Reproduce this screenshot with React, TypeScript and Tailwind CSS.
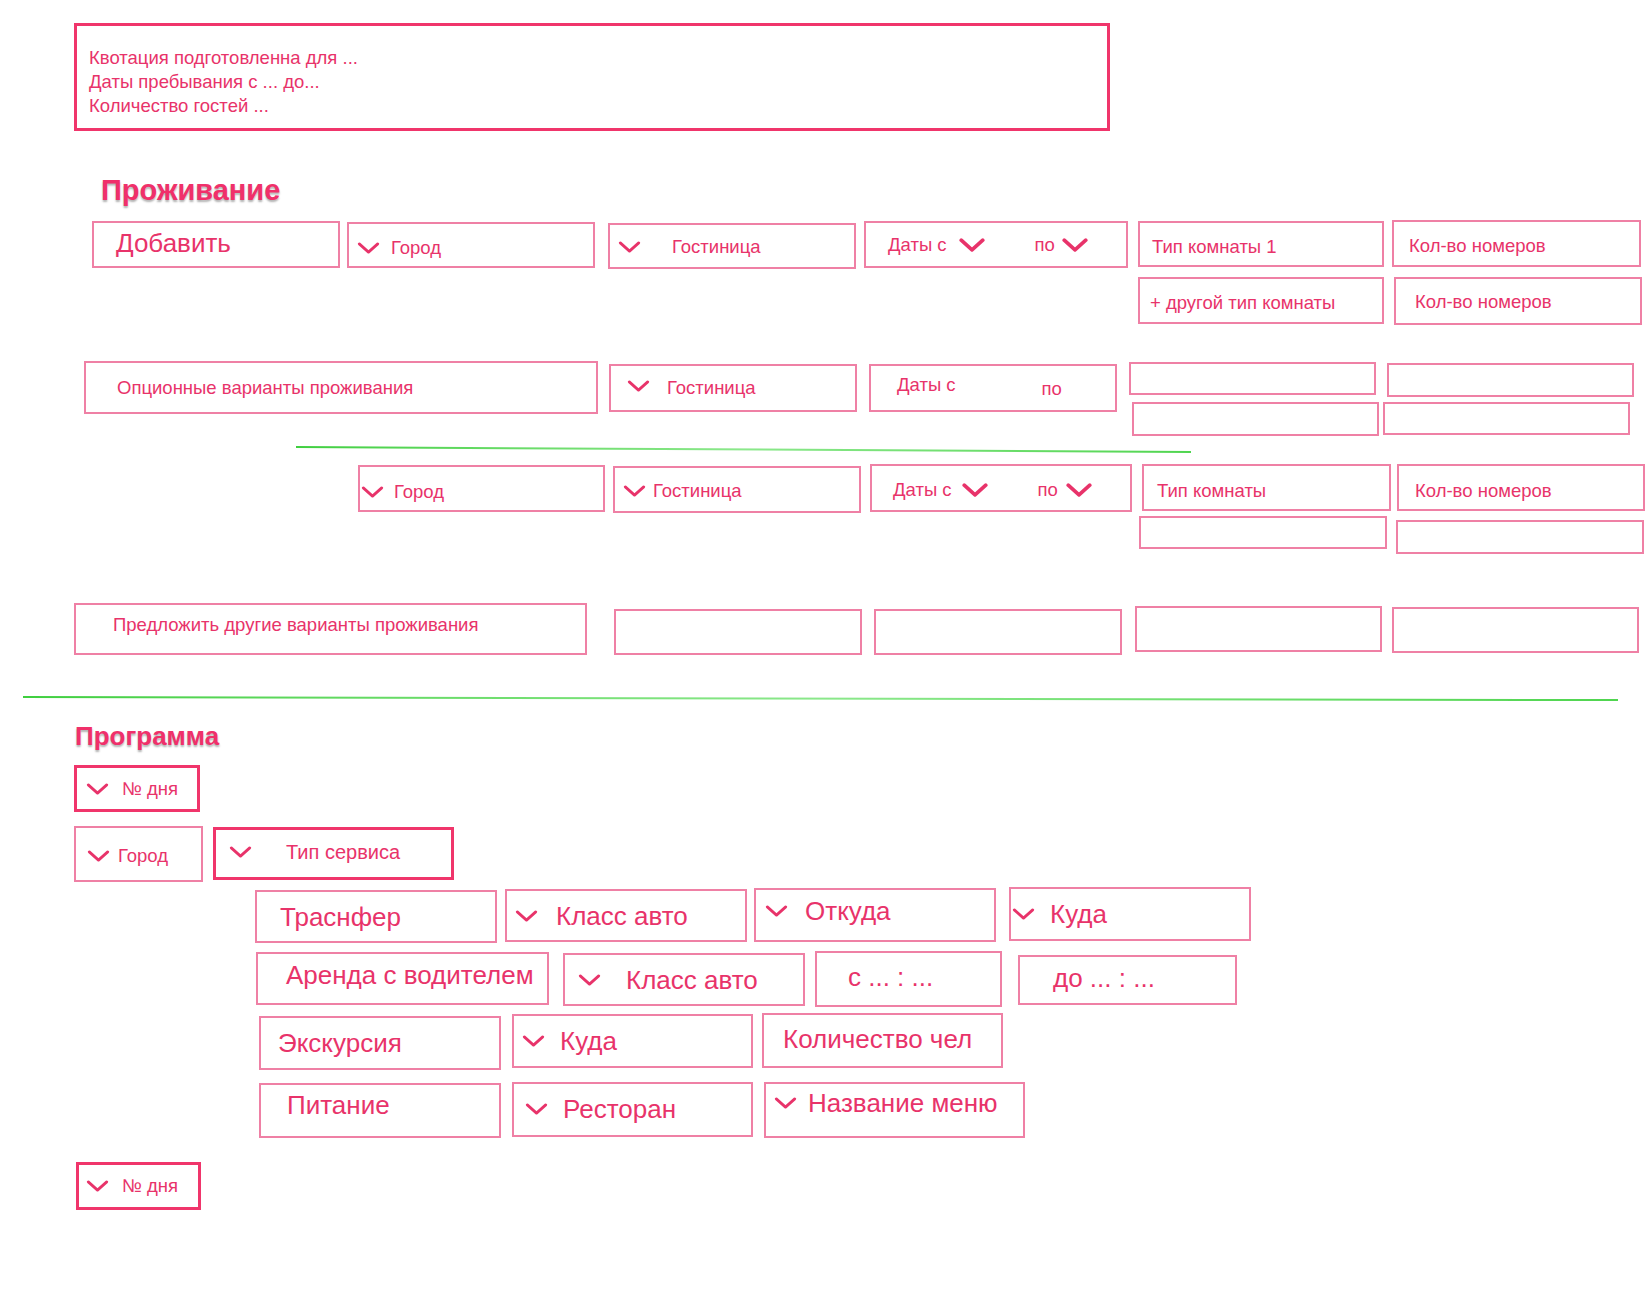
import React from "react";

const ink = "#e8336a";

function Box({
  className,
  thick = false,
  children,
}: {
  className: string;
  thick?: boolean;
  children?: React.ReactNode;
}) {
  return (
    <div
      className={
        "flex shrink-0 items-center whitespace-nowrap " +
        (thick ? "border-[3px] border-[#f0356b] " : "border-2 border-[#ef80a5] ") +
        className
      }
    >
      {children}
    </div>
  );
}

function Chevron({ big = false }: { big?: boolean }) {
  return (
    <svg
      viewBox="0 0 24 13"
      className={big ? "h-[14px] w-[26px] shrink-0" : "h-[12px] w-[23px] shrink-0"}
      fill="none"
    >
      <polyline
        points="2,2 12,11 22,2"
        stroke={ink}
        strokeWidth={big ? 3.4 : 3}
        strokeLinecap="round"
        strokeLinejoin="round"
      />
    </svg>
  );
}

export default function App() {
  return (
    <div className="flex h-[1289px] w-[1647px] flex-col items-start bg-white font-['Liberation_Sans',Arial,sans-serif] text-[18.5px] leading-[24px] text-[#e8336a]">
      {/* шапка квотации */}
      <div className="ml-[74px] mt-[23px] h-[108px] w-[1036px] shrink-0 border-[3px] border-[#f0356b] pl-[12px] pt-[20px]">
        <div>Квотация подготовленна для ...</div>
        <div>Даты пребывания с ... до...</div>
        <div>Количество гостей ...</div>
      </div>

      <h2 className="ml-[101px] mt-[44px] text-[29px] font-bold leading-[30px] text-[#f0306a] [text-shadow:0_2px_2px_rgba(0,0,0,0.3)]">
        Проживание
      </h2>

      {/* проживание: основной вариант */}
      <div className="mt-[15px] flex items-start">
        <Box className="ml-[92px] mt-[1px] h-[47px] w-[248px] pb-[4px] pl-[22px] text-[26px]">Добавить</Box>
        <Box className="ml-[7px] mt-[2px] h-[46px] w-[248px] pl-[8px] pt-[6px]">
          <Chevron />
          <span className="ml-[11px]">Город</span>
        </Box>
        <Box className="ml-[13px] mt-[3px] h-[46px] w-[248px] pl-[8px] pt-[2px]">
          <Chevron />
          <span className="ml-[31px]">Гостиница</span>
        </Box>
        <Box className="ml-[8px] mt-[1px] h-[47px] w-[264px] pl-[22px]">
          <span>Даты с</span>
          <span className="ml-[12px]"><Chevron big /></span>
          <span className="ml-[50px]">по</span>
          <span className="ml-[7px]"><Chevron big /></span>
        </Box>
        <div className="ml-[10px] mt-[1px] flex flex-col items-start">
          <Box className="h-[46px] w-[246px] pl-[12px] pt-[5px]">Тип комнаты 1</Box>
          <Box className="mt-[10px] h-[47px] w-[246px] pl-[10px] pt-[4px]">+ другой тип комнаты</Box>
        </div>
        <div className="ml-[8px] flex flex-col items-start">
          <Box className="h-[47px] w-[249px] pl-[15px] pt-[5px]">Кол-во номеров</Box>
          <Box className="ml-[2px] mt-[10px] h-[48px] w-[248px] pl-[19px] pt-[2px]">Кол-во номеров</Box>
        </div>
      </div>

      {/* опционные варианты */}
      <div className="mt-[36px] flex items-start">
        <Box className="ml-[84px] h-[53px] w-[514px] pl-[31px]">Опционные варианты проживания</Box>
        <Box className="ml-[11px] mt-[3px] h-[48px] w-[248px] pl-[16px]">
          <span className="mb-[4px]"><Chevron /></span>
          <span className="ml-[17px]">Гостиница</span>
        </Box>
        <Box className="ml-[12px] mt-[3px] h-[48px] w-[248px] pl-[26px]">
          <span className="mb-[7px]">Даты с</span>
          <span className="ml-[86px] mt-[2px]">по</span>
        </Box>
        <div className="ml-[12px] mt-[1px] flex flex-col items-start">
          <Box className="h-[33px] w-[247px]" />
          <Box className="ml-[3px] mt-[7px] h-[34px] w-[247px]" />
        </div>
        <div className="ml-[8px] mt-[2px] flex flex-col items-start">
          <Box className="h-[34px] w-[247px]" />
          <Box className="-ml-[4px] mt-[5px] h-[33px] w-[247px]" />
        </div>
      </div>

      <div className="ml-[296px] mt-[10px] h-[2px] w-[895px] shrink-0 origin-left rotate-[0.32deg] bg-gradient-to-r from-[#3fcf3f] via-[#8be88b] to-[#4fd54f]" />

      <div className="mt-[16px] flex items-start">
        <Box className="ml-[358px] mt-[1px] h-[47px] w-[247px] pl-[1px] pt-[6px]">
          <Chevron />
          <span className="ml-[10px]">Город</span>
        </Box>
        <Box className="ml-[8px] mt-[2px] h-[47px] w-[248px] pl-[8px] pt-[2px]">
          <Chevron />
          <span className="ml-[7px]">Гостиница</span>
        </Box>
        <Box className="ml-[9px] h-[48px] w-[262px] pl-[21px] pt-[3px]">
          <span>Даты с</span>
          <span className="ml-[10px]"><Chevron big /></span>
          <span className="ml-[50px]">по</span>
          <span className="ml-[8px]"><Chevron big /></span>
        </Box>
        <div className="ml-[10px] flex flex-col items-start">
          <Box className="h-[47px] w-[249px] pl-[13px] pt-[6px]">Тип комнаты</Box>
          <Box className="-ml-[3px] mt-[5px] h-[33px] w-[248px]" />
        </div>
        <div className="ml-[6px] flex flex-col items-start">
          <Box className="h-[47px] w-[248px] pl-[16px] pt-[6px]">Кол-во номеров</Box>
          <Box className="-ml-[1px] mt-[9px] h-[34px] w-[248px]" />
        </div>
      </div>

      <div className="mt-[49px] flex items-start">
        <Box className="ml-[74px] h-[52px] w-[513px] items-start pl-[37px] pt-[8px]">
          Предложить другие варианты проживания
        </Box>
        <Box className="ml-[27px] mt-[6px] h-[46px] w-[248px]" />
        <Box className="ml-[12px] mt-[6px] h-[46px] w-[248px]" />
        <Box className="ml-[13px] mt-[3px] h-[46px] w-[247px]" />
        <Box className="ml-[10px] mt-[4px] h-[46px] w-[247px]" />
      </div>

      <div className="ml-[23px] mt-[41px] h-[2px] w-[1595px] shrink-0 origin-left rotate-[0.11deg] bg-gradient-to-r from-[#3fcf3f] via-[#8be88b] to-[#4fd54f]" />

      <h2 className="ml-[75px] mt-[23px] text-[26px] font-bold leading-[30px] text-[#f0306a] [text-shadow:0_2px_2px_rgba(0,0,0,0.3)]">
        Программа
      </h2>

      {/* программа по дням */}
      <Box thick className="ml-[74px] mt-[14px] h-[47px] w-[126px] pl-[9px]">
        <Chevron />
        <span className="ml-[13px]">№ дня</span>
      </Box>

      <div className="mt-[14px] flex items-start">
        <Box className="ml-[74px] h-[56px] w-[129px] pl-[11px] pt-[4px]">
          <Chevron />
          <span className="ml-[8px]">Город</span>
        </Box>
        <Box thick className="ml-[10px] mt-[1px] h-[53px] w-[241px] pb-[3px] pl-[13px] text-[20px]">
          <Chevron />
          <span className="ml-[34px]">Тип сервиса</span>
        </Box>
      </div>

      <div className="mt-[5px] flex items-start text-[26px]">
        <Box className="ml-[255px] mt-[3px] h-[53px] w-[242px] pl-[23px]">Траснфер</Box>
        <Box className="ml-[8px] mt-[2px] h-[53px] w-[242px] pl-[8px]">
          <Chevron />
          <span className="ml-[18px]">Класс авто</span>
        </Box>
        <Box className="ml-[7px] mt-[1px] h-[54px] w-[242px] pb-[8px] pl-[9px]">
          <Chevron />
          <span className="ml-[17px]">Откуда</span>
        </Box>
        <Box className="ml-[13px] h-[54px] w-[242px] pl-[1px]">
          <Chevron />
          <span className="ml-[15px]">Куда</span>
        </Box>
      </div>

      <div className="mt-[8px] flex items-start text-[26px]">
        <Box className="ml-[256px] mt-[1px] h-[53px] w-[293px] pb-[8px] pl-[28px]">Аренда с водителем</Box>
        <Box className="ml-[14px] mt-[2px] h-[53px] w-[242px] pl-[13px]">
          <Chevron />
          <span className="ml-[25px]">Класс авто</span>
        </Box>
        <Box className="ml-[10px] h-[56px] w-[187px] pb-[4px] pl-[31px]">с ... : ...</Box>
        <Box className="ml-[16px] mt-[4px] h-[50px] w-[219px] pb-[4px] pl-[33px]">до ... : ...</Box>
      </div>

      <div className="mt-[6px] flex items-start text-[26px]">
        <Box className="ml-[259px] mt-[3px] h-[54px] w-[242px] pl-[17px]">Экскурсия</Box>
        <Box className="ml-[11px] mt-[1px] h-[54px] w-[241px] pl-[8px]">
          <Chevron />
          <span className="ml-[15px]">Куда</span>
        </Box>
        <Box className="ml-[9px] h-[55px] w-[241px] pb-[3px] pl-[19px]">Количество чел</Box>
      </div>

      <div className="mt-[12px] flex items-start text-[26px]">
        <Box className="ml-[259px] mt-[1px] h-[55px] w-[242px] pb-[12px] pl-[26px]">Питание</Box>
        <Box className="ml-[11px] h-[55px] w-[241px] pb-[2px] pl-[11px]">
          <Chevron />
          <span className="ml-[15px]">Ресторан</span>
        </Box>
        <Box className="ml-[11px] h-[56px] w-[261px] pb-[14px] pl-[8px]">
          <Chevron />
          <span className="ml-[11px]">Название меню</span>
        </Box>
      </div>

      <Box thick className="ml-[76px] mt-[24px] h-[48px] w-[125px] pl-[7px]">
        <Chevron />
        <span className="ml-[13px]">№ дня</span>
      </Box>
    </div>
  );
}
